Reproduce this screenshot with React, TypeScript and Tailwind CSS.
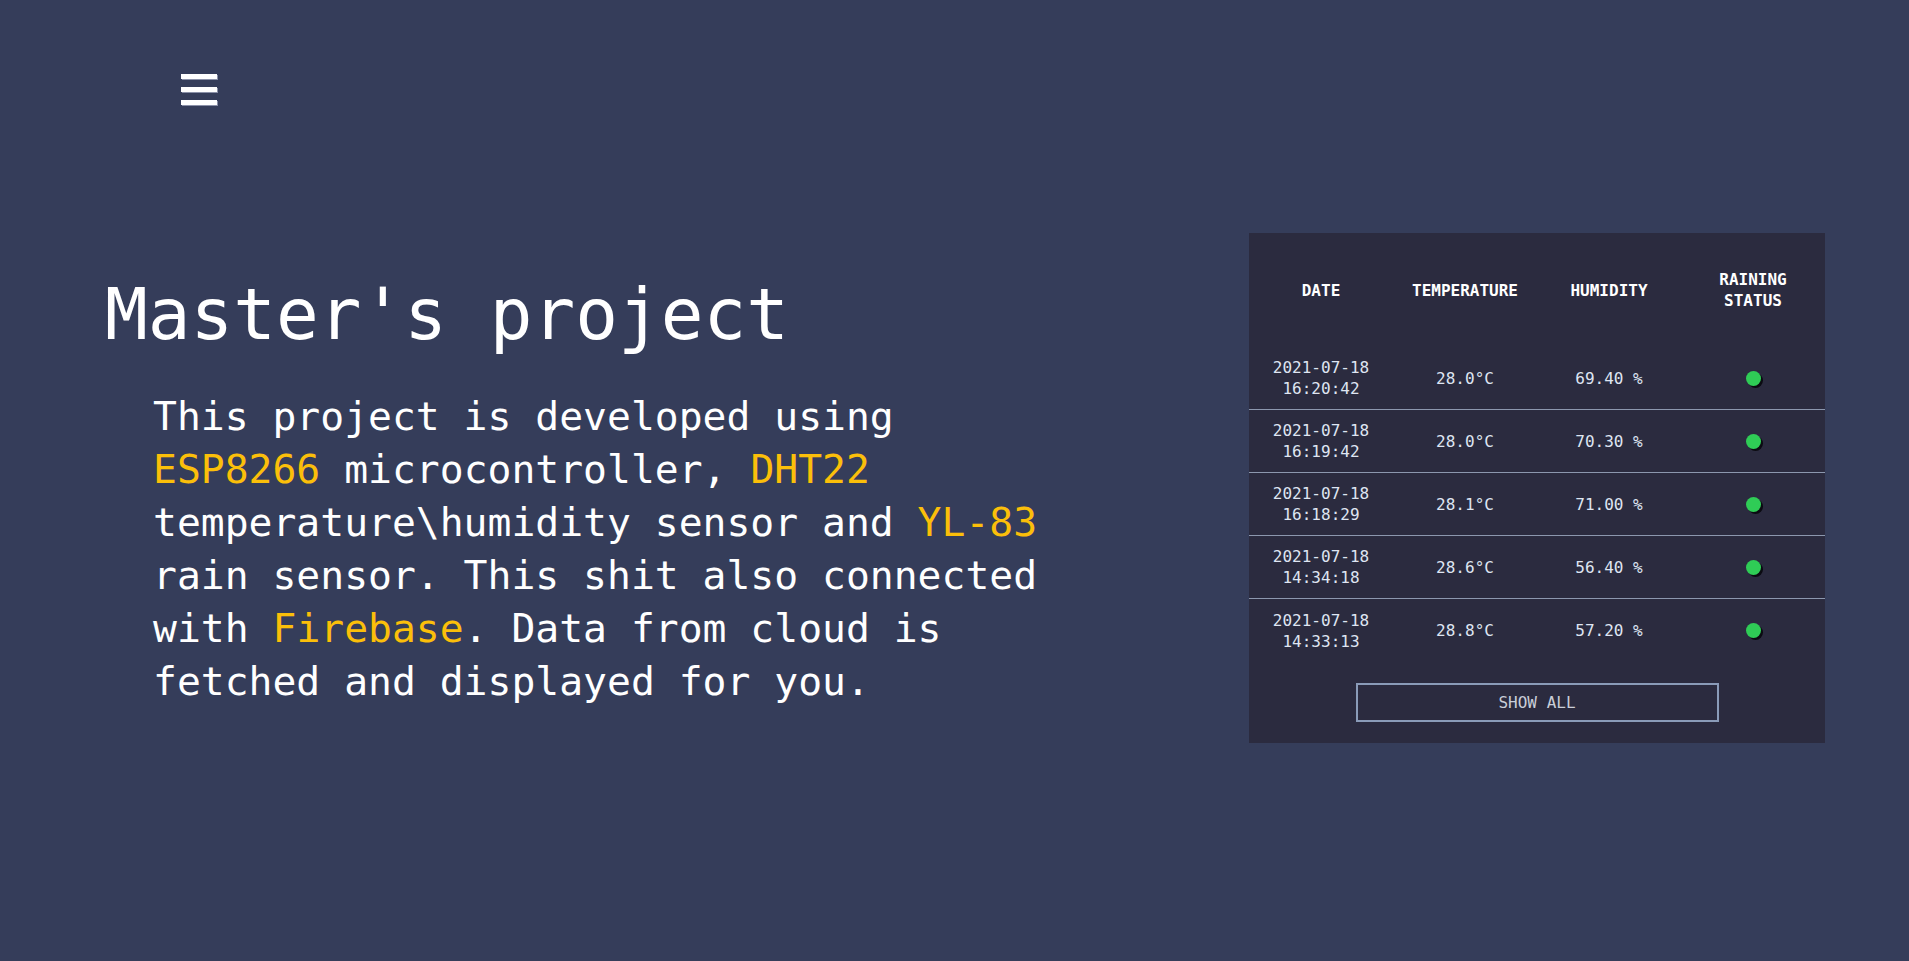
const rows = [
  { date: "2021-07-18", time: "16:20:42", temp: "28.0°C", hum: "69.40 %" },
  { date: "2021-07-18", time: "16:19:42", temp: "28.0°C", hum: "70.30 %" },
  { date: "2021-07-18", time: "16:18:29", temp: "28.1°C", hum: "71.00 %" },
  { date: "2021-07-18", time: "14:34:18", temp: "28.6°C", hum: "56.40 %" },
  { date: "2021-07-18", time: "14:33:13", temp: "28.8°C", hum: "57.20 %" },
];

const Highlight = ({ children }: { children: React.ReactNode }) => (
  <span className="text-[#fbbf0a]">{children}</span>
);

const App = () => {
  return (
    <div className="min-h-screen w-full bg-[#353d5a] text-white font-['DejaVu_Sans_Mono',monospace]">
      <header className="pl-[181px] pt-[74px]">
        <button className="flex flex-col gap-[8px]">
          <span className="block w-[36px] h-[5px] bg-white shadow-[1px_1px_0_#8a90a8]" />
          <span className="block w-[36px] h-[5px] bg-white shadow-[1px_1px_0_#8a90a8]" />
          <span className="block w-[36px] h-[5px] bg-white shadow-[1px_1px_0_#8a90a8]" />
        </button>
      </header>

      <main className="mt-[128px] flex items-start justify-between pl-[105px] pr-[84px]">
        <section className="mt-[46px]">
          <h1 className="text-[71px] leading-none font-normal">Master's project</h1>
          <p className="ml-[48px] mt-[40px] w-[910px] text-[39.7px] leading-[53px]">
            This project is developed using <Highlight>ESP8266</Highlight> microcontroller,{" "}
            <Highlight>DHT22</Highlight> temperature\humidity sensor and <Highlight>YL-83</Highlight> rain
            sensor. This shit also connected with <Highlight>Firebase</Highlight>. Data from cloud is
            fetched and displayed for you.
          </p>
        </section>

        <div className="w-[576px] bg-[#2b2b3f]">
          <div className="grid grid-cols-4 h-[114px] items-center text-center text-[16px] leading-[21px] font-bold text-white">
            <div>DATE</div>
            <div>TEMPERATURE</div>
            <div>HUMIDITY</div>
            <div>
              RAINING
              <br />
              STATUS
            </div>
          </div>

          {rows.map((r, i) => (
            <div
              key={i}
              className={`grid grid-cols-4 h-[63px] items-center text-center text-[16px] leading-[21px] text-[#dfe5f2] ${
                i < rows.length - 1 ? "border-b border-[#8c97ae]" : ""
              }`}
            >
              <div>
                {r.date}
                <br />
                {r.time}
              </div>
              <div>{r.temp}</div>
              <div>{r.hum}</div>
              <div className="flex justify-center">
                <span className="block w-[15px] h-[15px] rounded-full bg-[#2fcc56] shadow-[2px_2px_0_#0b0b12]" />
              </div>
            </div>
          ))}

          <div className="flex justify-center pt-[21px] pb-[21px]">
            <button className="w-[363px] h-[39px] border-2 border-[#8a9bb8] text-[16px] text-[#c9ced8]">
              SHOW ALL
            </button>
          </div>
        </div>
      </main>
    </div>
  );
};

export default App;
